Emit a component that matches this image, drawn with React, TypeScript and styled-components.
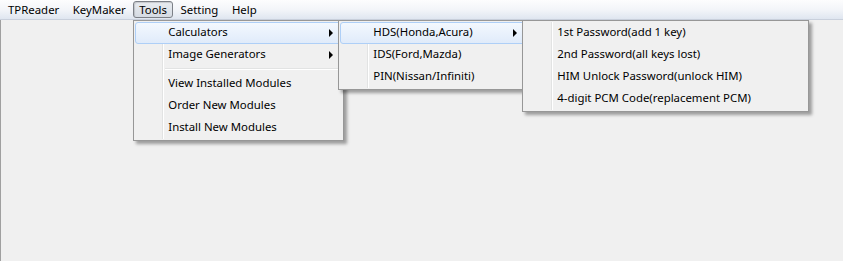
import styled, { createGlobalStyle } from "styled-components";

const GlobalStyle = createGlobalStyle`
  html, body {
    margin: 0;
    padding: 0;
    background: #f0f0f0;
  }
  body {
    font-family: "Noto Sans", "Open Sans", sans-serif;
    font-size: 11.4px;
    color: #000;
  }
`;

interface Entry {
  label: string;
  sub?: Entry[];
  open?: boolean;
}

type Row = Entry | "sep";

const pinMenu: Entry[] = [
  { label: "1st Password(add 1 key)" },
  { label: "2nd Password(all keys lost)" },
  { label: "HIM Unlock Password(unlock HIM)" },
  { label: "4-digit PCM Code(replacement PCM)" },
];

const calcMenu: Entry[] = [
  { label: "HDS(Honda,Acura)", sub: pinMenu, open: true },
  { label: "IDS(Ford,Mazda)" },
  { label: "PIN(Nissan/Infiniti)" },
];

const toolsMenu: Row[] = [
  { label: "Calculators", sub: calcMenu, open: true },
  { label: "Image Generators", sub: [] },
  "sep",
  { label: "View Installed Modules" },
  { label: "Order New Modules" },
  { label: "Install New Modules" },
];

const widths = [211, 190, 287];

function Menu({ rows, level }: { rows: Row[]; level: number }) {
  return (
    <Dropdown $width={widths[level]} $level={level}>
      {rows.map((row, i) =>
        row === "sep" ? (
          <Separator key={i} />
        ) : (
          <Item key={i} $active={!!row.open}>
            <Label>{row.label}</Label>
            {row.sub && <Arrow />}
            {row.open && row.sub && row.sub.length > 0 && (
              <Menu rows={row.sub} level={level + 1} />
            )}
          </Item>
        )
      )}
    </Dropdown>
  );
}

export default function App() {
  return (
    <>
      <GlobalStyle />
      <Page>
        <MenuBar>
          <TopItem>TPReader</TopItem>
          <TopItem>KeyMaker</TopItem>
          <TopItem $pressed>
            Tools
            <Menu rows={toolsMenu} level={0} />
          </TopItem>
          <TopItem>Setting</TopItem>
          <TopItem>Help</TopItem>
        </MenuBar>
        <Body />
      </Page>
    </>
  );
}

const Page = styled.div`
  width: 843px;
  height: 261px;
  background: #f0f0f0;
  display: flex;
  flex-direction: column;
  overflow: hidden;
`;

const MenuBar = styled.div`
  height: 19px;
  display: flex;
  align-items: center;
  padding-left: 2px;
  gap: 1.5px;
  background: linear-gradient(#fdfdfe 0%, #f3f5f9 50%, #dfe6f0 100%);
  border-bottom: 1px solid #c9d0dc;
`;

const TopItem = styled.div<{ $pressed?: boolean }>`
  position: relative;
  height: 17px;
  line-height: 15px;
  padding: 0 5px;
  box-sizing: border-box;
  border: 1px solid ${(p) => (p.$pressed ? "#7c8087" : "transparent")};
  border-radius: 3px;
  background: ${(p) =>
    p.$pressed ? "linear-gradient(#e9ecf0, #d5dbe3)" : "transparent"};
  box-shadow: ${(p) =>
    p.$pressed ? "inset 1px 1px 1px rgba(0,0,0,0.15)" : "none"};
`;

const Body = styled.div`
  flex: 1;
  border-left: 1px solid #a0a0a0;
`;

const Dropdown = styled.div<{ $width: number; $level: number }>`
  position: absolute;
  z-index: ${(p) => p.$level + 1};
  top: ${(p) => (p.$level === 0 ? "18px" : "-3px")};
  left: ${(p) => (p.$level === 0 ? "-1px" : "calc(100% - 3px)")};
  width: ${(p) => p.$width}px;
  box-sizing: border-box;
  padding: 1px;
  background: #f0f0f0;
  border: 1px solid #979797;
  box-shadow: 3px 3px 3px rgba(0, 0, 0, 0.35);
  &::before {
    content: "";
    position: absolute;
    left: 28px;
    top: 1px;
    bottom: 1px;
    width: 1px;
    background: #e2e3e3;
    box-shadow: 1px 0 0 #fff;
  }
`;

const Item = styled.div<{ $active?: boolean }>`
  position: relative;
  height: 22px;
  box-sizing: border-box;
  display: flex;
  align-items: center;
  padding: 0 8px 4px 32px;
  border: 1px solid ${(p) => (p.$active ? "#aecff7" : "transparent")};
  border-radius: 3px;
  background: ${(p) =>
    p.$active ? "linear-gradient(#f3f8fe, #e0ebfa)" : "transparent"};
  white-space: nowrap;
`;

const Label = styled.span`
  flex: 1;
  position: relative;
  z-index: 1;
`;

const Arrow = styled.span`
  width: 0;
  height: 0;
  margin-top: 4px;
  border-top: 4px solid transparent;
  border-bottom: 4px solid transparent;
  border-left: 4px solid #000;
`;

const Separator = styled.div`
  height: 1px;
  margin: 2px 0 3px 30px;
  background: #e2e3e3;
  border-bottom: 1px solid #fff;
`;
